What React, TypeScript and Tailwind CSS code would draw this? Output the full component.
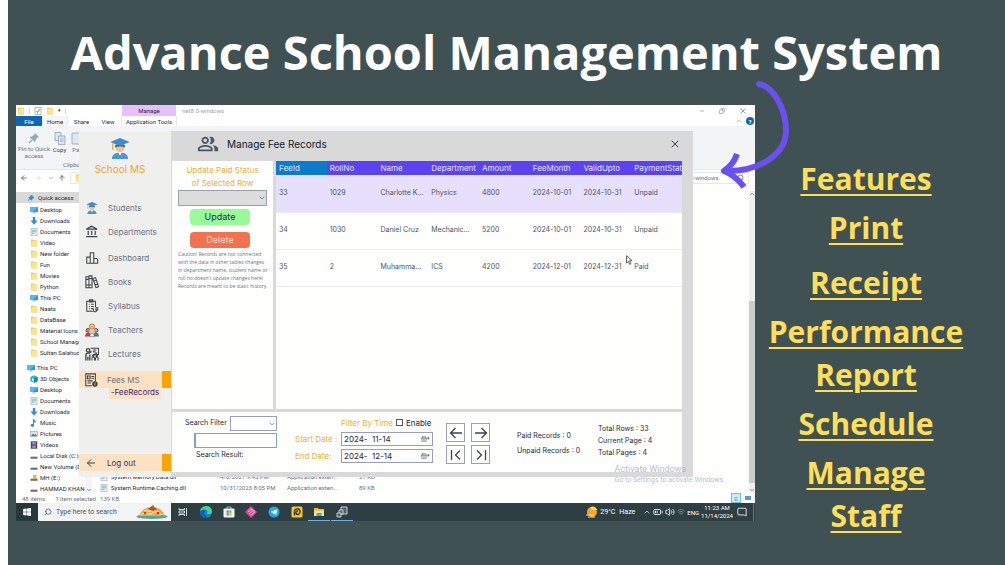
import type { ReactNode } from "react";
import {
  ArrowLeft,
  ArrowRight,
  ArrowUp,
  BatteryMedium,
  CalendarDays,
  ChevronDown,
  ChevronUp,
  Copy,
  MessageSquare,
  Minus,
  Search,
  Volume2,
  Wifi,
  X,
} from "lucide-react";
import { MdOutlineAccountBalance, MdOutlinePeopleAlt } from "react-icons/md";

interface FeeRecord {
  id: number;
  rollNo: number;
  name: string;
  department: string;
  amount: number;
  feeMonth: string;
  validUpto: string;
  status: string;
}

const records: FeeRecord[] = [
  { id: 33, rollNo: 1029, name: "Charlotte K...", department: "Physics", amount: 4800, feeMonth: "2024-10-01", validUpto: "2024-10-31", status: "Unpaid" },
  { id: 34, rollNo: 1030, name: "Daniel Cruz", department: "Mechanic...", amount: 5200, feeMonth: "2024-10-01", validUpto: "2024-10-31", status: "Unpaid" },
  { id: 35, rollNo: 2, name: "Muhamma...", department: "ICS", amount: 4200, feeMonth: "2024-12-01", validUpto: "2024-12-31", status: "Paid" },
];

const columns = ["RollNo", "Name", "Department", "Amount", "FeeMonth", "ValidUpto", "PaymentStat"];

const features = ["Features", "Print", "Receipt", "Performance\nReport", "Schedule", "Manage\nStaff"];

type PlaceKind = "folder" | "screen" | "down" | "doc" | "cube" | "music" | "picture" | "video" | "disk" | "lock";

const quickAccess: [string, PlaceKind][] = [
  ["Desktop", "screen"],
  ["Downloads", "down"],
  ["Documents", "doc"],
  ["Video", "folder"],
  ["New folder", "folder"],
  ["Fun", "folder"],
  ["Movies", "folder"],
  ["Python", "folder"],
  ["This PC", "screen"],
  ["Naats", "folder"],
  ["DataBase", "folder"],
  ["Material Icons", "folder"],
  ["School Manage", "folder"],
  ["Sultan Salahudd", "folder"],
];

const thisPc: [string, PlaceKind][] = [
  ["3D Objects", "cube"],
  ["Desktop", "screen"],
  ["Documents", "doc"],
  ["Downloads", "down"],
  ["Music", "music"],
  ["Pictures", "picture"],
  ["Videos", "video"],
  ["Local Disk (C:)", "disk"],
  ["New Volume (D:)", "disk"],
  ["MH (E:)", "lock"],
  ["HAMMAD KHAN", "disk"],
];

const PlaceIcon = ({ kind }: { kind: PlaceKind }) => (
  <svg viewBox="0 0 8 8" className="size-2 shrink-0">
    {kind === "folder" && (
      <>
        <path d="M1 0.5h2.5l.6.8H7v6.2H1z" fill="#f0cf5a" />
        <path d="M1.8 2H7v5.5H1z" fill="#fbe394" />
      </>
    )}
    {kind === "screen" && (
      <>
        <rect x="0" y="1" width="8" height="5" fill="#1f9ae6" />
        <path d="M0 1h8L3 6H0z" fill="#4fb9f5" />
        <rect x="2.5" y="6.5" width="3" height=".8" fill="#7c8b95" />
      </>
    )}
    {kind === "down" && <path d="M2.8 0h2.4v3.5H7.5L4 7.8.5 3.5h2.3z" fill="#2f8fd6" />}
    {kind === "doc" && (
      <>
        <path d="M1 .3h6v7.4H1z" fill="#eef4f7" stroke="#8aa0ab" strokeWidth=".6" />
        <path d="M2 2.2h4M2 3.8h4M2 5.4h2.5" stroke="#4b9cb5" strokeWidth=".7" />
      </>
    )}
    {kind === "cube" && (
      <>
        <path d="M4 .3 7.6 2v4.2L4 7.8.4 6.2V2z" fill="#22b8cf" />
        <path d="M4 3.6 7.6 2v4.2L4 7.8z" fill="#0b8ca6" />
        <path d="M2 3.2l2 .9v2.4l-2-.9z" fill="#e9fbff" />
      </>
    )}
    {kind === "music" && (
      <path d="M3 0h1c.3 1.6 2.6 2 2 4.4C5.7 3 4.6 2.9 4 2.7V6.2A1.7 1.5 0 1 1 3 5z" fill="#1e96d8" />
    )}
    {kind === "picture" && (
      <>
        <rect x=".3" y="1.3" width="7.4" height="5.4" fill="#d8e8f2" stroke="#8497a3" strokeWidth=".5" />
        <path d="M1 6l2-2.6 1.5 1.6 1-1L7 6z" fill="#3b7ea8" />
      </>
    )}
    {kind === "video" && (
      <>
        <rect x=".8" y=".3" width="6.4" height="7.4" fill="#474a66" />
        <path d="M2.3 1h3.4v2.5H2.3zM2.3 4.5h3.4V7H2.3z" fill="#8c93c4" />
      </>
    )}
    {(kind === "disk" || kind === "lock") && (
      <>
        <path d="M.5 4.8h7v2h-7z" fill="#6b7277" />
        <path d="M.5 4.8 1.5 4h5l1 .8z" fill="#bcc4c8" />
      </>
    )}
    {kind === "lock" && <rect x="3" y="1" width="3.5" height="4" fill="#e5b93b" />}
  </svg>
);

const StudentIcon = ({ className }: { className: string }) => (
  <svg viewBox="0 0 24 26" className={className}>
    <path d="M2 26c0-5 3.5-8 10-8s10 3 10 8z" fill="#4c96d3" />
    <path d="M9 17h6l-3 5z" fill="#f4f0e6" />
    <circle cx="12" cy="12" r="5.5" fill="#f3c088" />
    <path d="M6 8.5h12V12c-3-2-9-2-12 0z" fill="#2f6ea6" />
    <path d="M12 0l12 5-12 5L0 5z" fill="#3f8acb" />
    <path d="M3 6.5V15" stroke="#e4a92f" strokeWidth="1.5" />
  </svg>
);

const TeachersIcon = () => (
  <svg viewBox="0 0 16 16" className="size-3.5">
    <circle cx="8" cy="4" r="3" fill="#eab68a" stroke="#b36a2e" strokeWidth=".8" />
    <circle cx="3.5" cy="8.5" r="2.3" fill="#c98a63" stroke="#4a3a38" strokeWidth=".9" />
    <circle cx="12.5" cy="8.5" r="2.3" fill="#dba37b" stroke="#4a3a38" strokeWidth=".9" />
    <path d="M5 7.5h6v7H5z" fill="#e9c7a5" />
    <path d="M0 15.5c0-3 1.5-4.5 3.5-4.5S7 12.5 7 15.5z" fill="#c9383c" />
    <path d="M9 15.5c0-3 1.5-4.5 3.5-4.5s3.5 1.5 3.5 4.5z" fill="#2f7fa8" />
    <path d="M5.5 15.5c0-2.5 1-3.5 2.5-3.5s2.5 1 2.5 3.5z" fill="#f0f0ee" stroke="#555" strokeWidth=".5" />
  </svg>
);

const LineIcon = ({ children }: { children: ReactNode }) => (
  <svg viewBox="0 0 16 16" className="size-3.5" fill="none" stroke="#3f4347" strokeWidth="1.2">
    {children}
  </svg>
);

const DashboardIcon = () => (
  <LineIcon>
    <path d="M2 7h4v7H2zM6 2h4v12H6zM10 8.5h2.5a2 2 0 0 1 2 2V14H10z" />
  </LineIcon>
);

const BooksIcon = () => (
  <LineIcon>
    <path d="M1 2h3.5v12.5H1zM4.5 1H8v13.5H4.5zM9 4l3-1 3.5 10.5-3 1zM1 5h3.5M1 11.5h3.5M4.5 4H8M4.5 11.5H8M10 7l3-1M11.5 11.5l3-1" />
  </LineIcon>
);

const SyllabusIcon = () => (
  <LineIcon>
    <path d="M9 14H2V2.5h10V9M5 1h4v2.5H5zM4.5 6h1M7 6h3M4.5 8.5h1M7 8.5h3M4.5 11h1M7 11h2" />
    <path d="M9.5 10.5v2a2 2 0 0 0 4 0M12.5 10h2v2.5h-2zM11.5 14.5v1" />
  </LineIcon>
);

const LecturesIcon = () => (
  <LineIcon>
    <path d="M6.5 1.5h9v7H9M9 3.5h4M9 5.5h3M11 7h3" />
    <circle cx="3.5" cy="3.8" r="2" strokeWidth="1.5" />
    <path d="M1 15.5V9c0-1.3.7-2 2-2h2l2.5-2M5.5 8.500v7M3.3 11v4.5" strokeWidth="1.5" />
    <path d="M8 15.5V13a1.5 1.5 0 0 1 3 0v2.5M12 15.5V13a1.5 1.5 0 0 1 3 0v2.5" />
    <circle cx="9.5" cy="10" r=".9" fill="#3f4347" />
    <circle cx="13.5" cy="10" r=".9" fill="#3f4347" />
  </LineIcon>
);

const FeesIcon = () => (
  <LineIcon>
    <path d="M9 14.5H2V1h11v8M4 3.5h3v3H4zM8.5 4h3M8.5 6h3M4 9h6M4 11.5h4" />
    <circle cx="12.5" cy="12.5" r="2.5" fill="#3f4347" />
    <path d="M12.5 11v3" stroke="#fde1c3" strokeWidth=".8" />
  </LineIcon>
);

const NavRow = ({ icon, label }: { icon: ReactNode; label: string }) => (
  <li>
    <a href="#" className="flex h-6 items-center">
      <span className="flex w-[29px] items-center justify-center pr-1">{icon}</span>
      {label}
    </a>
  </li>
);

const FolderGlyph = () => <PlaceIcon kind="folder" />;

const ExplorerTop = () => (
  <>
    <div className="flex h-[11px] items-center bg-white pl-px">
      <FolderGlyph />
      <span className="ml-1 h-1.5 w-px bg-gray-300" />
      <svg viewBox="0 0 8 8" className="ml-1 size-2">
        <path d="M1 .5h6v7H1z" fill="#fff" stroke="#8b8b8b" strokeWidth=".6" />
        <path d="M2.5 4l1 1.5 2.5-3.5" fill="none" stroke="#d0443e" strokeWidth=".9" />
      </svg>
      <span className="ml-1 flex w-[76px] items-center gap-1">
        <FolderGlyph />
        <span className="text-[5px]">▾</span>
        <span className="h-1.5 w-px bg-gray-300" />
      </span>
      <span className="flex h-full w-[54px] items-center justify-center bg-[#e6c0f8]">Manage</span>
      <span className="ml-1.5 flex-1 text-gray-400">net8.0-windows</span>
      <span className="flex items-center gap-3.5 pr-2 text-gray-500">
        <Minus className="size-1.5" />
        <Copy className="size-1.5 -scale-x-100" />
        <X className="size-2" />
      </span>
    </div>
    <div className="flex h-[10px] items-center bg-white">
      <span className="flex h-full w-[26px] items-center justify-center bg-[#0d68b1] text-white">File</span>
      <span className="flex h-full w-[26px] items-center justify-center border-x border-gray-200 bg-[#f4f6f7]">Home</span>
      <span className="w-[27px] text-center">Share</span>
      <span className="w-[26px] text-center">View</span>
      <span className="flex h-full w-[56px] items-center justify-center border-x border-gray-200">Application Tools</span>
      <span className="ml-auto flex items-center gap-1 pr-px">
        <ChevronUp className="size-1.5 text-gray-500" />
        <span className="flex size-2 items-center justify-center rounded-full bg-[#0d68b1] text-[6px] font-bold text-white">?</span>
      </span>
    </div>
    <div className="flex h-11 items-start border-b border-gray-200 bg-[#f2f4f5] pt-1.5 text-center leading-[7px] text-gray-500">
      <div className="flex w-[36px] flex-col items-center gap-px">
        <svg viewBox="0 0 12 12" className="size-3">
          <path d="M7 1l4 4-1.5.5L7.5 8l-.3 2.5L1.5 5 4 4.5 6.5 2.5z" fill="#8fa9bd" />
          <path d="M4 8l-3 3" stroke="#8fa9bd" strokeWidth="1.2" />
        </svg>
        Pin to Quick access
      </div>
      <div className="flex w-[15px] flex-col items-center gap-px text-gray-700">
        <svg viewBox="0 0 12 13" className="h-[13px] w-3" fill="#dbe8f1" stroke="#8ea5b5" strokeWidth=".8">
          <path d="M1 .5h6v8H1z" />
          <path d="M4.5 4H11v8.5H4.5z" />
          <path d="M6 7h3.5M6 9h3.5" />
        </svg>
        Copy
      </div>
      <div className="flex flex-col pl-1">
        <svg viewBox="0 0 12 13" className="h-[13px] w-3" fill="#dbe8f1" stroke="#8ea5b5" strokeWidth=".8">
          <path d="M1 1h8v11H1z" />
        </svg>
        <span className="pt-px">Paste</span>
        <span className="-ml-2 pt-2">Clipboard</span>
      </div>
    </div>
    <div className="flex h-[15px] items-center bg-white text-gray-500">
      <ArrowLeft className="ml-1 size-2 text-gray-700" />
      <ArrowRight className="ml-1.5 size-2 text-gray-300" />
      <ChevronDown className="ml-1.5 size-1.5" />
      <ArrowUp className="ml-1 size-2 text-gray-700" />
      <div className="ml-1 flex h-3 flex-1 items-center gap-1 border border-gray-200 pl-1">
        <FolderGlyph />›
      </div>
      <div className="mr-1.5 flex h-3 w-[73px] items-center justify-between border border-gray-200 px-1">
        <span className="pl-1">8.0-windows</span>
        <Search className="size-2 -scale-x-100 text-gray-700" />
      </div>
    </div>
  </>
);

const ExplorerBody = () => (
  <div className="flex h-[308px] overflow-hidden bg-[#fefefc] pt-1.5">
    <nav className="w-[69px] overflow-hidden whitespace-nowrap pt-px leading-[11px] text-gray-800">
      <div className="flex h-[11px] items-center gap-1 bg-[#d9d9d9] pl-3">
        <svg viewBox="0 0 8 8" className="size-1.5">
          <path d="M4.5 0L8 3.500 6 4.500 4.500 7 1 3.500 3.500 2zM2 5L0 8" fill="#2f8fd6" stroke="#2f8fd6" />
        </svg>
        Quick access
      </div>
      <ul className="mt-px">
        {quickAccess.map(([name, kind]) => (
          <li key={name} className="flex items-center gap-[2px] pl-[14px]">
            <PlaceIcon kind={kind} />
            {name}
          </li>
        ))}
      </ul>
      <div className="mt-1 flex items-center gap-[2px] pl-[11px]">
        <PlaceIcon kind="screen" />
        This PC
      </div>
      <ul>
        {thisPc.map(([name, kind]) => (
          <li key={name} className="flex items-center gap-[2px] pl-[14px]">
            <PlaceIcon kind={kind} />
            {name}
          </li>
        ))}
      </ul>
    </nav>
    <div className="flex w-[7px] items-end justify-center bg-[#f4f4f4]">
      <ChevronDown className="size-1.5" />
    </div>
    <table className="ml-2 self-end text-left leading-[11px] text-gray-500">
      <tbody>
        <tr>
          <td className="w-[120px] text-gray-800"><span className="flex items-center gap-[3px]"><PlaceIcon kind="doc" />System.Memory.Data.dll</span></td>
          <td className="w-[67px]">4/6/2021 9:45 PM</td>
          <td className="w-[72px]">Application exten...</td>
          <td>21 KB</td>
        </tr>
        <tr>
          <td className="text-gray-800"><span className="flex items-center gap-[3px]"><PlaceIcon kind="doc" />System.Runtime.Caching.dll</span></td>
          <td>10/31/2023 8:05 PM</td>
          <td>Application exten...</td>
          <td>89 KB</td>
        </tr>
      </tbody>
    </table>
    <div className="ml-auto flex w-1.5 flex-col items-center bg-[#f0f0f0]">
      <ChevronUp className="size-1.5" />
      <span className="mt-auto h-[182px] w-full bg-[#cdcdcd]" />
      <ChevronDown className="mt-1 size-1.5" />
    </div>
  </div>
);

const Taskbar = () => (
  <div className="flex h-[18px] items-center bg-[#2d3f43] text-white">
    <button type="button" aria-label="Start" className="flex h-full w-[22px] items-center justify-center bg-[#26383c]">
      <svg viewBox="0 0 8 8" className="size-2" fill="#fff">
        <path d="M0 1l3.600-.5v3.300H0zM4 .4L8 0v3.800H4zM0 4.200h3.600v3.300L0 7zM4 4.200h4V8l-4-.4z" />
      </svg>
    </button>
    <label className="flex h-full w-[133px] items-center bg-[#f2f3f3] pl-1.5 text-gray-700">
      <Search className="size-2 -scale-x-100" />
      <input className="ml-1 w-[78px] bg-transparent text-[7px] placeholder:text-gray-600" placeholder="Type here to search" />
      <svg viewBox="0 0 32 16" className="ml-0.5 h-4 w-8">
        <ellipse cx="16" cy="12.5" rx="15.5" ry="2.5" fill="#58a5a0" />
        <path d="M3 12C5 6 10 3 16 3s11 3 13 9z" fill="#e8a648" />
        <path d="M5 11c4-5 8 2 12-2s6 3 10 1M8 7c4-2 8 3 15 0" fill="none" stroke="#fbe0a0" strokeWidth="1.3" />
        <path d="M12 5l4-3 5 3-4 2z" fill="#c9432f" />
        <circle cx="9" cy="9" r="1.3" fill="#c9432f" />
        <circle cx="22" cy="9" r="1.3" fill="#b8392b" />
        <circle cx="17" cy="2.5" r="1.2" fill="#5a9a3c" />
        <circle cx="26" cy="12" r="1.2" fill="#6aa84f" />
      </svg>
    </label>
    <div className="flex h-full items-center">
      <span className="flex w-[23px] justify-center">
        <svg viewBox="0 0 10 10" className="size-2.5" fill="none" stroke="#e5e9ea" strokeWidth=".9">
          <path d="M1 1v1.5h5.5V1M1 9V7.5h5.5V9M1 4h5.5v2H1zM8.5 1v8" />
        </svg>
      </span>
      <span className="flex w-[23px] justify-center">
        <svg viewBox="0 0 12 12" className="size-3">
          <circle cx="6" cy="6" r="6" fill="#1b7fd0" />
          <path d="M0 5.5C.5 2 3.5 0 6.5 0 10 0 12 2.7 12 5.3c0 2-1.5 3-3.3 3-1.5 0-2-.8-1.5-1.5.8-1.2 0-3.3-2.5-3.3C2.5 3.500.8 4.300 0 5.500z" fill="#45d38b" />
          <path d="M0 6c1-2 4-3 6-1.5C3.5 5 3.500 9 8 11.600 3.500 13 0 10 0 6z" fill="#1260b0" />
        </svg>
      </span>
      <span className="flex w-[23px] justify-center">
        <svg viewBox="0 0 12 12" className="size-3">
          <path d="M4 3V1h4v2" fill="none" stroke="#7cc4ef" />
          <rect x=".5" y="2.5" width="11" height="9" rx="1" fill="#eef3f5" />
          <path d="M3.500 4.500h2.300v2.300H3.500z" fill="#e8543b" />
          <path d="M6.200 4.500h2.300v2.300H6.200z" fill="#7cb83e" />
          <path d="M3.500 7.200h2.300v2.300H3.500z" fill="#2f9be0" />
          <path d="M6.200 7.200h2.300v2.300H6.200z" fill="#f3b52c" />
        </svg>
      </span>
      <span className="flex w-[22px] justify-center">
        <svg viewBox="0 0 12 12" className="size-3">
          <path d="M6 0l6 6-6 6-6-6z" fill="#d9489a" />
          <path d="M6 2.5L9.5 6 6 9.500M3 6l3-3M4.500 7.500l3-3" fill="none" stroke="#fbd5ea" />
        </svg>
      </span>
      <span className="flex w-[23px] justify-center">
        <svg viewBox="0 0 12 12" className="size-3">
          <circle cx="6" cy="6" r="5.5" fill="#2ca5e0" />
          <path d="M2.5 6L9.300 3.300 8.200 9 6.200 7.500 5.200 8.500 5 6.800z" fill="#fff" />
        </svg>
      </span>
      <span className="flex w-[23px] justify-center">
        <svg viewBox="0 0 12 12" className="size-3">
          <rect x=".5" y=".5" width="11" height="11" rx="1.5" fill="#f2c62d" />
          <path d="M3.500 9.500V5a2.800 2.800 0 1 1 3 3.500A1.300 1.300 0 1 1 7 5" fill="none" stroke="#2a2a22" strokeWidth="1.3" />
        </svg>
      </span>
      <span className="flex h-full w-[22px] items-center justify-center border-b border-[#6fb4e4]">
        <svg viewBox="0 0 12 12" className="size-3">
          <path d="M1 2h4l1 1h5v7H1z" fill="#e9b83b" />
          <path d="M1 4.500h10V10H1z" fill="#fbdf86" />
          <path d="M3.500 7h5v3h-5z" fill="#4a9fdc" />
        </svg>
      </span>
      <span className="ml-px flex h-full w-[22px] items-center justify-center border-b border-[#6fb4e4]">
        <svg viewBox="0 0 12 12" className="size-3" fill="#50626a" stroke="#e5e9ea" strokeWidth=".8">
          <path d="M5 1h6v7H5z" />
          <path d="M3 4h4v4H3z" />
          <path d="M1 7h4v4H1z" />
        </svg>
      </span>
    </div>
    <div className="ml-auto flex h-full items-center text-[7px]">
      <svg viewBox="0 0 12 12" className="size-3">
        <circle cx="6" cy="6" r="5" fill="#f5a623" />
        <path d="M4 2a4 4 0 0 1 7 2c-2 0-5 0-7-2z" fill="#fdd663" />
        <path d="M0 9h8M2 11h7" stroke="#f3d9a8" strokeWidth="1.2" />
      </svg>
      <span className="ml-0.5">29°C</span>
      <span className="ml-1">Haze</span>
      <ChevronUp className="ml-2 size-2" />
      <BatteryMedium className="ml-0.5 size-2.5" />
      <Volume2 className="ml-0.5 size-2.5" />
      <Wifi className="ml-0.5 size-2 text-gray-400" />
      <span className="ml-0.5 text-[6px]">ENG</span>
      <span className="ml-0.5 text-center text-[6px] leading-[8px]">
        11:23 AM
        <br />
        11/14/2024
      </span>
      <MessageSquare className="mx-1 size-2.5 -scale-x-100" />
      <span className="ml-0.5 h-full w-0.5 border-l border-gray-500" />
    </div>
  </div>
);

const AppSidebar = () => (
  <aside className="flex w-[92px] shrink-0 flex-col bg-[#efefee] pb-1.5 text-[8px] text-gray-500">
    <div className="flex flex-col items-center pr-2.5 pt-[7px]">
      <StudentIcon className="h-[21px] w-5" />
      <span className="text-[10px] leading-5 text-[#f0a818]">School MS</span>
    </div>
    <ul className="mt-[17px]">
      <NavRow icon={<StudentIcon className="h-3 w-3" />} label="Students" />
      <NavRow icon={<MdOutlineAccountBalance className="size-3.5 text-gray-700" />} label="Departments" />
    </ul>
    <ul className="mt-[2px]">
      <NavRow icon={<DashboardIcon />} label="Dashboard" />
      <NavRow icon={<BooksIcon />} label="Books" />
      <NavRow icon={<SyllabusIcon />} label="Syllabus" />
      <NavRow icon={<TeachersIcon />} label="Teachers" />
      <NavRow icon={<LecturesIcon />} label="Lectures" />
    </ul>
    <a href="#" className="mt-[5px] flex h-[17px] items-center border-r-[9px] border-[#f7a409] bg-[#fde1c3]">
      <span className="flex w-[28px] items-center justify-center pr-1"><FeesIcon /></span>
      Fees MS
    </a>
    <a href="#" className="mr-2.5 ml-[30px] h-[11px] bg-[#fde1c3] text-center leading-[9px] text-[#3b2a78]">-FeeRecords</a>
    <a href="#" className="mt-auto flex h-[17px] items-center border-r-[9px] border-[#f7a409] bg-[#fde1c3] text-[#3b2a78]">
      <span className="flex w-[28px] items-center justify-center pr-1"><ArrowLeft className="size-3 text-gray-700" /></span>
      Log out
    </a>
  </aside>
);

const UpdatePanel = () => (
  <section className="flex w-[101px] shrink-0 flex-col bg-[#fefefc] px-1.5 pt-[3px] text-[8px]">
    <label htmlFor="paid-status" className="text-center leading-[13px] text-[#e8b040]">
      Update Paid Status
      <br />
      of Selected Row
    </label>
    <span className="relative flex items-center">
      <select id="paid-status" className="h-4 w-full appearance-none border border-gray-400 bg-[#dcdcdc]" />
      <ChevronDown className="pointer-events-none absolute right-px size-2 text-gray-600" />
    </span>
    <div className="mr-[17px] ml-3 flex flex-col gap-[7px] pt-[3px] text-[9px]">
      <button type="button" className="h-4 rounded bg-[#98fb98] text-[#1c2a66]">Update</button>
      <button type="button" className="h-4 rounded bg-[#f27250] text-[#fbd9cd]">Delete</button>
    </div>
    <p className="mt-0.5 whitespace-nowrap font-['Open_Sans',sans-serif] text-[5px] leading-[8px] text-gray-500">
      Caution: Records are not connected
      <br />
      with the data in other tables changes
      <br />
      in department name, student name or
      <br />
      roll no doesn't update changes here!
      <br />
      Records are meant to be static history.
    </p>
  </section>
);

const RecordsTable = () => (
  <section className="min-w-0 flex-1 bg-[#fefefc]">
    <table className="w-full table-fixed text-left text-[7px] text-gray-600">
      <thead>
        <tr className="h-[14px] bg-[#5b43f0] text-[8px] text-[#e6e2ff]">
          <th className="bg-[#0b7ccb] pl-[3px] font-normal">FeeId</th>
          {columns.map((name) => (
            <th key={name} className="whitespace-nowrap pl-[3px] font-normal">{name}</th>
          ))}
        </tr>
      </thead>
      <tbody>
        {records.map((r) => (
          <tr key={r.id} className="h-[37px] whitespace-nowrap border-b border-[#ebe9f5] first:bg-[#e6e0fd] [&>td]:pl-[3px]">
            <td>{r.id}</td>
            <td>{r.rollNo}</td>
            <td>{r.name}</td>
            <td>{r.department}</td>
            <td>{r.amount}</td>
            <td>{r.feeMonth}</td>
            <td>{r.validUpto}</td>
            <td>{r.status}</td>
          </tr>
        ))}
      </tbody>
    </table>
  </section>
);

const DateField = ({ id, label, value }: { id: string; label: string; value: string }) => (
  <>
    <label htmlFor={id} className="text-[8px] text-[#e8b040]">{label}</label>
    <span className="flex h-[14px] items-center border border-gray-400 px-0.5 text-gray-600">
      <input id={id} defaultValue={value} className="min-w-0 flex-1 whitespace-pre bg-transparent text-[8px] text-gray-800" />
      <CalendarDays className="size-1.5" />
      <span className="text-[5px]">▾</span>
    </span>
  </>
);

const NavButton = ({ label, path }: { label: string; path: string }) => (
  <button type="button" aria-label={label} className="flex size-[19px] items-center justify-center border border-gray-400">
    <svg viewBox="0 0 14 14" className="size-3.5" fill="none" stroke="#3f4347" strokeWidth="1.3">
      <path d={path} />
    </svg>
  </button>
);

const FilterPanel = () => (
  <section className="flex h-[60px] bg-[#fefefc] pt-1 pl-[13px] text-[7px] text-gray-800">
    <div className="flex w-[92px] flex-col">
      <div className="flex items-center justify-between whitespace-nowrap">
        <label htmlFor="search-filter">Search Filter</label>
        <span className="relative flex items-center">
          <select id="search-filter" className="h-[15px] w-[47px] appearance-none border border-gray-400" />
          <ChevronDown className="pointer-events-none absolute right-px size-2 text-gray-500" />
        </span>
      </div>
      <input aria-label="Search" className="mt-0.5 ml-[9px] h-[15px] border border-l-2 border-[#7fa6b3]" />
      <span className="mt-0.5 ml-[11px]">Search Result:</span>
    </div>
    <div className="ml-[18px] grid grid-cols-[46px_92px] grid-rows-[13px_14px_14px] items-center gap-y-[3px] whitespace-nowrap">
      <label className="col-start-2 flex items-center text-[8px]">
        <span className="text-[#e8b040]">Filter By Time</span>
        <input type="checkbox" className="mx-[3px] size-[7px] appearance-none border border-gray-600" />
        Enable
      </label>
      <DateField id="start" label="Start Date :" value="2024-  11-14" />
      <DateField id="end" label="End Date:" value="2024-  12-14" />
    </div>
    <div className="mt-[7px] ml-[13px] grid grid-cols-2 content-start gap-x-1.5 gap-y-[3px]">
      <NavButton label="Previous page" path="M13 7H1.5M6.5 2L1.5 7l5 5" />
      <NavButton label="Next page" path="M1 7h11.5M7.5 2l5 5-5 5" />
      <NavButton label="First page" path="M2.5 2v10M11 2.5L6.5 7l4.5 4.5" />
      <NavButton label="Last page" path="M3 2.5L7.5 7 3 11.5M11.5 2v10" />
    </div>
    <div className="mt-3 ml-[27px] w-[81px] whitespace-nowrap leading-[15px]">
      <p>Paid Records : 0</p>
      <p>Unpaid Records : 0</p>
    </div>
    <div className="mt-[7px] whitespace-nowrap leading-[12px]">
      <p>Total Rows : 33</p>
      <p>Current Page : 4</p>
      <p>Total Pages : 4</p>
    </div>
  </section>
);

const FeeRecordsWindow = () => (
  <div className="absolute top-[26px] right-[62px] bottom-[44px] left-[63px] flex bg-[#d9d9d9] font-['Inter',sans-serif]">
    <AppSidebar />
    <div className="flex min-w-0 flex-1 flex-col pl-px">
      <header className="flex h-[30px] shrink-0 items-center pr-3 pb-1 pl-[25px]">
        <MdOutlinePeopleAlt className="size-[22px] text-gray-600" />
        <h2 className="ml-2 text-[10px] text-gray-900">Manage Fee Records</h2>
        <button type="button" aria-label="Close" className="ml-auto">
          <X className="size-3 text-gray-700" />
        </button>
      </header>
      <div className="flex flex-1 flex-col gap-[3px] pr-[11px] pb-[5px]">
        <div className="flex flex-1 gap-[3px]">
          <UpdatePanel />
          <RecordsTable />
        </div>
        <FilterPanel />
      </div>
    </div>
  </div>
);

const Desktop = () => (
  <section className="relative min-w-0 flex-1 self-start font-['Roboto',sans-serif] text-[6px] text-gray-800">
    <ExplorerTop />
    <ExplorerBody />
    <div className="flex h-[10px] items-center bg-white pl-1.5 text-gray-500">
      <span>48 items</span>
      <span className="ml-2.5">1 item selected</span>
      <span className="ml-1">139 KB</span>
      <span className="ml-auto flex size-2.5 items-center justify-center border border-[#68c3dc] bg-[#c9ecf5]">≡</span>
      <span className="mx-1 h-1 w-1.5 bg-[#5c9dbd]" />
    </div>
    <Taskbar />
    <FeeRecordsWindow />
    <div className="absolute right-[30px] bottom-[36px] text-gray-400/70">
      <p className="text-[9px] leading-[11px]">Activate Windows</p>
      <p className="text-[7px] leading-[10px]">Go to Settings to activate Windows.</p>
    </div>
    <svg viewBox="0 0 12 16" className="absolute top-[150px] right-[122px] h-2.5 w-2" fill="#fff" stroke="#555" strokeWidth="1.5">
      <path d="M2 1v12l3-3 2 5 2-1-2-5h4z" />
    </svg>
    <svg viewBox="0 0 76 116" className="absolute top-[-26px] right-[-38px] h-[116px] w-[76px]" fill="none" stroke="#6a50f0" strokeWidth="6" strokeLinejoin="round">
      <path d="M42 5C58 8 69 32 69 52C69 74 44 93 8 92" strokeLinecap="round" />
      <path d="M20 75C18 81 13 88 7 92C15 95 21 100 27 108" />
    </svg>
  </section>
);

const App = () => (
  <main className="min-h-screen border-l-8 border-white bg-[#405153] font-['Open_Sans',sans-serif]">
    <h1 className="h-[105px] text-center text-[47px] font-bold leading-[105px] text-white">Advance School Management System</h1>
    <div className="flex pl-2">
      <Desktop />
      <nav className="w-[250px] shrink-0 pt-[52px] pr-7">
        <ul className="flex flex-col gap-1.5 text-center text-[30px] font-bold leading-[43px] text-[#ffde59]">
          {features.map((name) => (
            <li key={name} className={name === "Receipt" ? "mt-1.5" : ""}>
              <a href="#" className="whitespace-pre-line underline decoration-2 underline-offset-4">{name}</a>
            </li>
          ))}
        </ul>
      </nav>
    </div>
  </main>
);

export default App;
